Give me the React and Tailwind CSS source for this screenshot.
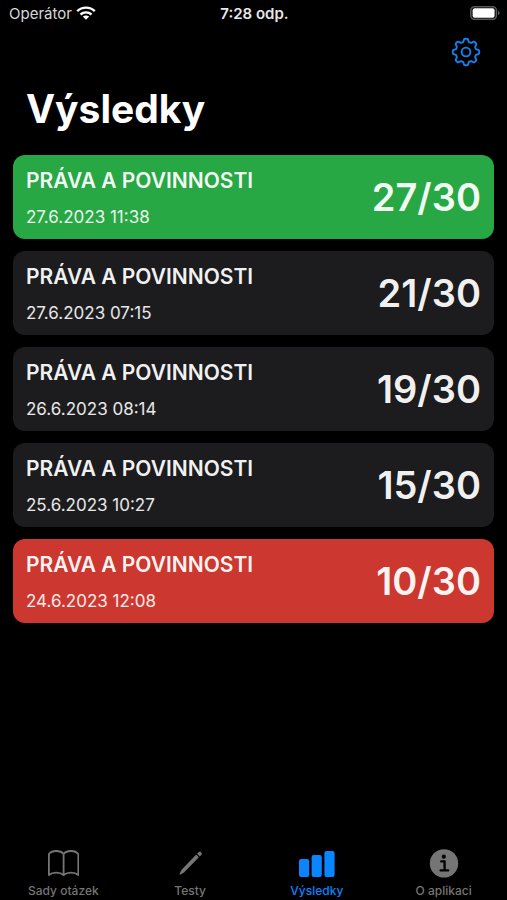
import React from "react";

const results = [
  { title: "PRÁVA A POVINNOSTI", date: "27.6.2023 11:38", score: "27/30", tone: "bg-[#28a745]" },
  { title: "PRÁVA A POVINNOSTI", date: "27.6.2023 07:15", score: "21/30", tone: "bg-[#1c1c1e]" },
  { title: "PRÁVA A POVINNOSTI", date: "26.6.2023 08:14", score: "19/30", tone: "bg-[#1c1c1e]" },
  { title: "PRÁVA A POVINNOSTI", date: "25.6.2023 10:27", score: "15/30", tone: "bg-[#1c1c1e]" },
  { title: "PRÁVA A POVINNOSTI", date: "24.6.2023 12:08", score: "10/30", tone: "bg-[#cc372f]" },
];

// Outline of an eight-toothed gear centred on (15, 15).
const gearPath =
  Array.from({ length: 160 }, (_, i) => {
    const a = (i / 160) * Math.PI * 2;
    const r = 11.8 + 1.5 * Math.tanh(2.2 * Math.cos(8 * a));
    const x = (15 + r * Math.cos(a)).toFixed(2);
    const y = (15 + r * Math.sin(a)).toFixed(2);
    return `${i ? "L" : "M"}${x} ${y}`;
  }).join("") + "Z";

function GearIcon() {
  return (
    <svg viewBox="0 0 30 30" className="size-[30px]" fill="none" stroke="currentColor" strokeWidth="1.9" strokeLinejoin="round" aria-hidden="true">
      <path d={gearPath} />
      <circle cx="15" cy="15" r="4.4" />
    </svg>
  );
}

function WifiIcon() {
  return (
    <svg viewBox="0 0 20 14" className="h-[14px] w-5" fill="none" stroke="currentColor" strokeWidth="2.4" aria-hidden="true">
      <path d="M1.2 5.2C6.1.4 13.9.4 18.8 5.2" />
      <path d="M4.5 8.5C7.6 5.6 12.4 5.6 15.5 8.5" />
      <path d="M10 13.8 6.8 10.6C8.6 9 11.4 9 13.2 10.6Z" fill="currentColor" stroke="none" />
    </svg>
  );
}

function BatteryIcon() {
  return (
    <svg viewBox="0 0 30 14" className="h-[14px] w-[30px]" aria-hidden="true">
      <rect x="0.8" y="0.8" width="25.6" height="12.4" rx="3.6" fill="none" stroke="#59595b" strokeWidth="1.5" />
      <rect x="2.6" y="2.2" width="22" height="9.6" rx="2" fill="#fff" />
      <path d="M28 4.8C30.1 5.6 30.1 8.4 28 9.2Z" fill="#59595b" />
    </svg>
  );
}

function BookIcon() {
  return (
    <svg viewBox="0 0 32 28" className="h-7 w-8" fill="none" stroke="currentColor" strokeWidth="1.8" strokeLinejoin="round" aria-hidden="true">
      <path d="M16.6 4C13.2-.1 5 .1 1.9 4V25C5.4 21.8 13 21.8 16.6 25C20.2 21.8 27.8 21.8 31.3 25V4C28.2.1 20-.1 16.6 4ZM16.6 4V25" />
    </svg>
  );
}

function PencilIcon() {
  return (
    <svg viewBox="0 0 26 26" className="size-[26px]" fill="currentColor" aria-hidden="true">
      <path d="M19.2 3.6 21.9 6.3 7 21.4 3.6 23.5C2.9 23.9 2.3 23.3 2.7 22.6L4.6 18.7Z" />
      <path d="M20.1 2.7 21.7 1.1C22.3.5 23.1.5 23.7 1.1L24.4 1.8C25 2.4 25 3.2 24.4 3.8L22.8 5.4Z" />
    </svg>
  );
}

function BarsIcon() {
  return (
    <svg viewBox="0 0 36 28" className="h-7 w-9" fill="currentColor" aria-hidden="true">
      <rect x="0" y="9" width="10.2" height="18" rx="2.2" />
      <rect x="12.6" y="5" width="10.2" height="22" rx="2.2" />
      <rect x="25.4" y="1" width="10.2" height="26" rx="2.2" />
    </svg>
  );
}

function InfoIcon() {
  return (
    <svg viewBox="0 0 30 30" className="size-[30px]" aria-hidden="true">
      <circle cx="15" cy="14.4" r="14.2" fill="currentColor" />
      <circle cx="14.8" cy="7.7" r="2.1" fill="#000" />
      <path d="M12.2 12.4H15.6V21.2M11.6 21.4H19.2" fill="none" stroke="#000" strokeWidth="2.3" strokeLinecap="round" strokeLinejoin="round" />
    </svg>
  );
}

const tabs = [
  { label: "Sady otázek", Icon: BookIcon },
  { label: "Testy", Icon: PencilIcon },
  { label: "Výsledky", Icon: BarsIcon, active: true },
  { label: "O aplikaci", Icon: InfoIcon },
];

export default function App() {
  return (
    <div className="flex min-h-screen flex-col bg-black font-['Inter','Liberation_Sans',sans-serif] text-white">
      <header>
        <div className="grid h-7 grid-cols-3 items-center pr-[7px] pl-[9px] text-[15px] leading-5">
          <div className="flex items-center gap-1 text-[#d8d8d8]">
            <span>Operátor</span>
            <span className="pb-0.5 text-white"><WifiIcon /></span>
          </div>
          <time className="text-center font-semibold whitespace-nowrap text-[#e8e8e8]">7:28 odp.</time>
          <div className="flex justify-end pb-0.5"><BatteryIcon /></div>
        </div>
        <div className="flex h-12 items-center justify-end px-[26px]">
          <button type="button" aria-label="Nastavení" className="text-[#1482f0]">
            <GearIcon />
          </button>
        </div>
        <h1 className="px-[26px] pt-2 text-[39px] leading-[50px] font-bold">Výsledky</h1>
      </header>

      <main className="flex-1 px-[13px] pt-[21px]">
        <ul className="flex flex-col gap-3">
          {results.map((r) => (
            <li key={r.date} className={`flex h-[84px] items-center justify-between rounded-xl px-[13px] ${r.tone}`}>
              <div className="pt-1">
                <h2 className="text-[21px] leading-7 font-semibold text-white/95">{r.title}</h2>
                <p className="mt-2 text-[17px] leading-7 text-white/90">{r.date}</p>
              </div>
              <span className="text-[38px] leading-[48px] font-semibold text-white/95">{r.score}</span>
            </li>
          ))}
        </ul>
      </main>

      <nav className="grid grid-cols-4 pb-px">
        {tabs.map(({ label, Icon, active }) => (
          <button
            key={label}
            type="button"
            aria-current={active ? "page" : undefined}
            className={`flex flex-col items-center text-[12px] leading-4 font-medium ${active ? "text-[#0a84ff]" : "text-[#757575]"}`}
          >
            <span className="flex h-[38px] items-center"><Icon /></span>
            <span>{label}</span>
          </button>
        ))}
      </nav>
    </div>
  );
}
